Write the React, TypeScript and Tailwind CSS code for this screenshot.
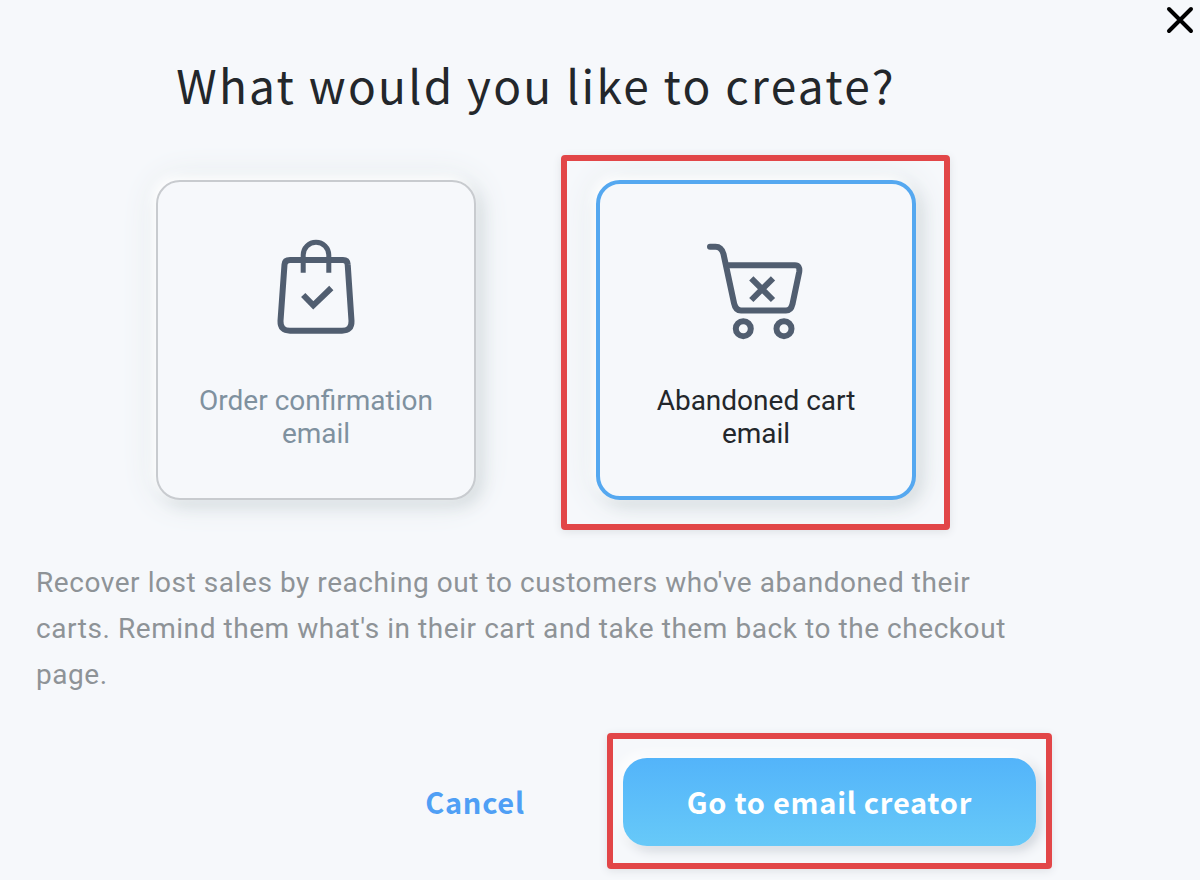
import { useState } from 'react'
import type { ReactNode } from 'react'
import clsx from 'clsx'

type EmailType = 'order' | 'cart'

function BagIcon() {
  return (
    <svg viewBox="0 0 104 104" className="size-[104px]" fill="none" stroke="#515e70" strokeWidth="6" aria-hidden="true">
      <path d="M26 24H79Q83.500 24 83.700 28.500L87.500 85Q87.800 94.700 78 94.700H26Q16.200 94.700 16.500 85L20.500 28.500Q20.800 24 26 24Z" />
      <path d="M39.200 36.700V19A12.800 12.800 0 0 1 64.800 19V36.700" strokeWidth="5" />
      <path d="M39.200 59L49.300 69.300L67.300 52" />
    </svg>
  )
}

function CartIcon() {
  return (
    <svg viewBox="0 0 104 104" className="size-[104px]" fill="none" stroke="#515e70" strokeWidth="6" aria-hidden="true">
      <path d="M6 10.700H11.500Q17.500 10.700 19.500 18L30 67Q31.500 74.500 37 74.500H82Q87 74.500 88.500 68L95.200 36Q96.200 29.300 91 29.300H22" strokeLinecap="round" />
      <path d="M47.300 42.300L69 64M69 42.300L47.300 64" />
      <circle cx="39.300" cy="92.700" r="7.500" />
      <circle cx="80" cy="92.700" r="7.500" />
    </svg>
  )
}

interface OptionCardProps {
  value: EmailType
  label: string
  icon: ReactNode
  selected: boolean
  onSelect: (value: EmailType) => void
}

function OptionCard({ value, label, icon, selected, onSelect }: OptionCardProps) {
  return (
    <label
      className={clsx(
        'flex size-80 cursor-pointer flex-col items-center gap-11 rounded-3xl bg-[#f6f8fb] text-center shadow-[-4px_-4px_12px_#ffffff,6px_6px_16px_#d7dde0,0_0_36px_#e0e7ea]',
        selected
          ? 'border-4 border-[#55a8f0] px-9 pt-[52px] text-[#23272b]'
          : 'border-2 border-[#c8cbcf] px-9 pt-[54px] text-[#7f919f]',
      )}
    >
      <input
        type="radio"
        name="email-type"
        value={value}
        checked={selected}
        onChange={() => onSelect(value)}
        className="sr-only"
      />
      {icon}
      <span className="text-[28px] leading-[33px]">{label}</span>
    </label>
  )
}

function Highlight({ className }: { className: string }) {
  return (
    <div className={clsx('pointer-events-none absolute rounded-sm border-6 border-[#e24648] shadow-[0_2px_8px_#dfe2e6]', className)} />
  )
}

export default function App() {
  const [selected, setSelected] = useState<EmailType>('cart')

  return (
    <div className="relative min-h-screen overflow-hidden bg-[#f6f8fb] px-9 pt-12 pb-8 font-['Roboto',sans-serif]">
      <button type="button" aria-label="Close" className="absolute top-1 right-1 cursor-pointer">
        <svg viewBox="0 0 32 32" className="size-8" fill="none" stroke="#000" strokeWidth="4" strokeLinecap="round">
          <path d="M5 5L27 27M27 5L5 27" />
        </svg>
      </button>

      <main className="max-w-[1000px]">
        <h1 className="text-center font-['Noto_Sans_CJK_SC',sans-serif] text-[46px] leading-[72px] tracking-wider text-[#23272b]">
          What would you like to create?
        </h1>

        <div role="radiogroup" aria-label="Email type" className="mt-[60px] flex justify-center gap-[120px]">
          <OptionCard
            value="order"
            label="Order confirmation email"
            icon={<BagIcon />}
            selected={selected === 'order'}
            onSelect={setSelected}
          />
          <div className="relative">
            <OptionCard
              value="cart"
              label="Abandoned cart email"
              icon={<CartIcon />}
              selected={selected === 'cart'}
              onSelect={setSelected}
            />
            <Highlight className="-top-[25px] -right-[34px] -bottom-[30px] -left-[35px]" />
          </div>
        </div>

        <p className="mt-[60px] text-[28px] leading-[46px] tracking-[0.02em] text-[#8e9397]">
          Recover lost sales by reaching out to customers who've abandoned their carts. Remind them what's in their cart
          and take them back to the checkout page.
        </p>

        <div className="mt-[60px] flex items-center justify-end gap-[98px] font-['Noto_Sans_CJK_SC',sans-serif] text-[29px] font-bold tracking-wide">
          <button type="button" className="cursor-pointer text-[#4f9ff5]">Cancel</button>
          <div className="relative">
            <button
              type="button"
              className="h-22 cursor-pointer rounded-3xl bg-linear-to-b from-[#53b4fa] to-[#67c9f8] px-16 text-white shadow-[-4px_-4px_12px_#ffffff,4px_4px_12px_#ccd1d8]"
            >
              Go to email creator
            </button>
            <Highlight className="-inset-x-4 -top-[25px] -bottom-[23px]" />
          </div>
        </div>
      </main>
    </div>
  )
}
